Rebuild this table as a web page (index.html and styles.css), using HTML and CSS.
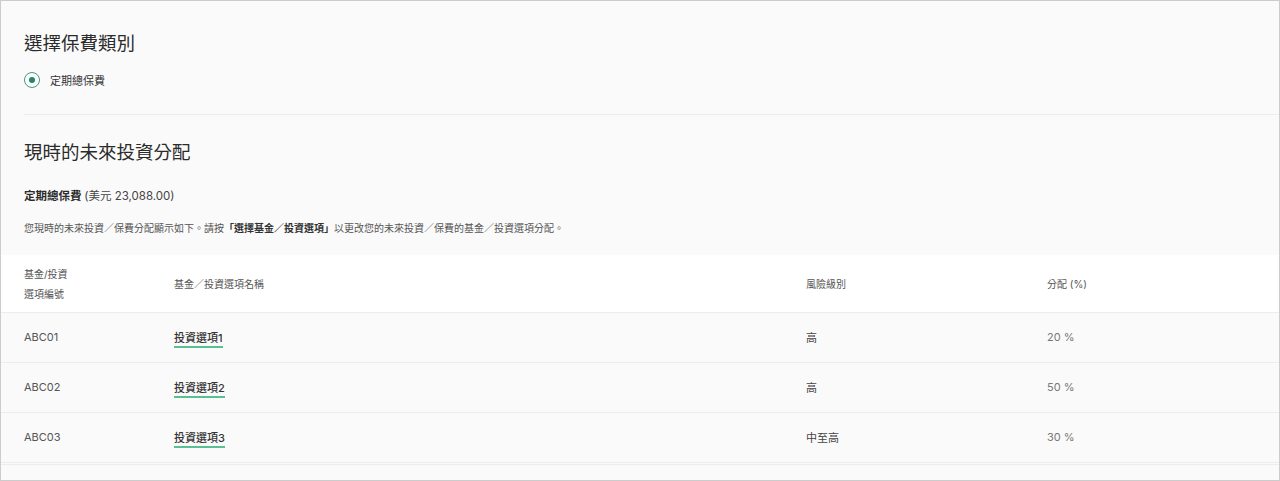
FILE: index.html
```html
<!DOCTYPE html>
<html lang="zh-Hant">
<head>
<meta charset="utf-8">
<title>現時的未來投資分配</title>
<link rel="stylesheet" href="styles.css">
</head>
<body>
<div class="frame">
  <section class="premium-type">
    <h1 class="title">選擇保費類別</h1>
    <label class="radio-row">
      <span class="radio"><span class="radio-dot"></span></span>
      <span class="radio-label">定期總保費</span>
    </label>
  </section>
  <hr class="divider">
  <section class="allocation">
    <h2 class="title title-2">現時的未來投資分配</h2>
    <p class="sub">定期總保費 <span class="amount">(美元 23,088.00)</span></p>
    <p class="desc">您現時的未來投資／保費分配顯示如下。請按<b>「選擇基金／投資選項」</b>以更改您的未來投資／保費的基金／投資選項分配。</p>
  </section>
  <table class="funds">
    <thead>
      <tr>
        <th class="c1">基金/投資<br>選項編號</th>
        <th class="c2">基金／投資選項名稱</th>
        <th class="c3">風險級別</th>
        <th class="c4">分配 (%)</th>
      </tr>
    </thead>
    <tbody>
      <tr>
        <td class="code">ABC01</td>
        <td><a class="fund-link" href="#">投資選項1</a></td>
        <td class="risk">高</td>
        <td class="pct">20 %</td>
      </tr>
      <tr>
        <td class="code">ABC02</td>
        <td><a class="fund-link" href="#">投資選項2</a></td>
        <td class="risk">高</td>
        <td class="pct">50 %</td>
      </tr>
      <tr>
        <td class="code">ABC03</td>
        <td><a class="fund-link" href="#">投資選項3</a></td>
        <td class="risk">中至高</td>
        <td class="pct">30 %</td>
      </tr>
      <tr class="foot-row">
        <td colspan="4"></td>
      </tr>
    </tbody>
  </table>
</div>
</body>
</html>
```
FILE: styles.css
```css
html, body {
  margin: 0;
  padding: 0;
  background: #ffffff;
}
body {
  font-family: "Inter", "Noto Sans CJK TC", "Noto Sans", sans-serif;
  color: #333;
}
.frame {
  box-sizing: border-box;
  width: 1280px;
  height: 481px;
  border: 1px solid #cccccc;
  background: #fafafa;
  overflow: hidden;
}
.premium-type {
  padding: 28px 24px 0 23px;
}
.title {
  margin: 0;
  font-size: 18.5px;
  line-height: 28px;
  font-weight: 400;
  color: #2b2b2b;
}
.radio-row {
  display: flex;
  align-items: center;
  gap: 10px;
  margin-top: 13px;
  height: 20px;
}
.radio {
  box-sizing: border-box;
  width: 16px;
  height: 16px;
  border: 1.5px solid #3e9e77;
  border-radius: 50%;
  display: flex;
  align-items: center;
  justify-content: center;
  background: #fff;
}
.radio-dot {
  width: 6px;
  height: 6px;
  border-radius: 50%;
  background: #1f8a5e;
}
.radio-label {
  font-size: 11px;
  color: #333;
}
.divider {
  border: 0;
  border-top: 1px solid #ececec;
  margin: 24px 0 0 23px;
  height: 0;
}
.allocation {
  padding: 23px 24px 0 23px;
}
.title-2 {
  margin: 0;
}
.sub {
  margin: 21px 0 0;
  font-size: 11.5px;
  line-height: 18px;
  font-weight: 700;
  color: #2b2b2b;
}
.sub .amount {
  font-weight: 400;
  color: #444;
}
.desc {
  margin: 15px 0 0;
  font-size: 10px;
  line-height: 16px;
  color: #555;
}
.desc b {
  font-weight: 700;
  color: #333;
}
.funds {
  margin-top: 19px;
  width: 100%;
  border-collapse: collapse;
  table-layout: fixed;
}
.funds th {
  background: #ffffff;
  height: 57px;
  padding: 0;
  text-align: left;
  font-size: 10px;
  line-height: 20px;
  font-weight: 400;
  color: #555;
  vertical-align: middle;
}
.funds .c1 { width: 173px; padding-left: 23px; box-sizing: border-box; }
.funds .c2 { width: 632px; }
.funds .c3 { width: 241px; }
.funds td {
  height: 48px;
  padding: 0 0 1px;
  border-top: 1px solid #ececec;
  font-size: 11px;
  color: #555;
  vertical-align: middle;
}
.funds td.code {
  padding-left: 23px;
}
.fund-link {
  color: #333;
  font-weight: 500;
  text-decoration: none;
  border-bottom: 2px solid #58c091;
  padding-bottom: 1px;
}
.funds td.risk {
  color: #444;
}
.funds td.pct {
  color: #777;
}
.foot-row td {
  height: 16px;
  border-top: 3px double #ececec;
}
```
